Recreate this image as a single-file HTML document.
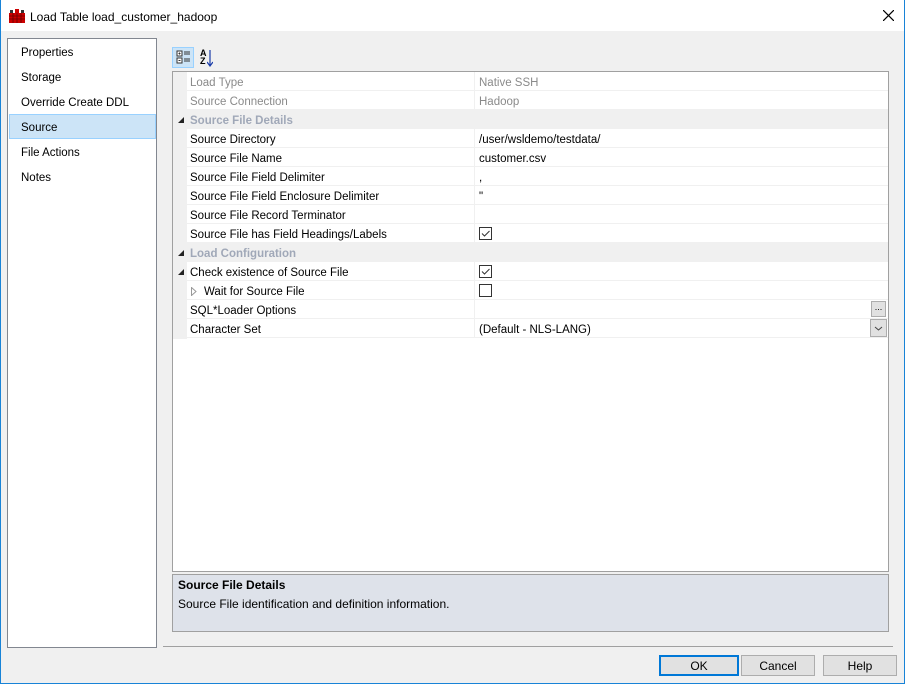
<!DOCTYPE html>
<html><head><style>
*{margin:0;padding:0;box-sizing:border-box}
body{width:905px;height:684px;background:#f0f0f0;font-family:"Liberation Sans",sans-serif;font-size:11.5px;color:#000;position:relative;overflow:hidden}
.a{position:absolute}
.win{left:0;top:0;width:905px;height:684px;border:1px solid #1883d7;border-top:none}
.title{left:0;top:0;width:905px;height:31px;background:#fff}
.list{left:7px;top:38px;width:150px;height:610px;background:#fff;border:1px solid #828790}
.li{position:absolute;left:13px;font-size:11.5px}
.sel{left:1px;top:75px;width:147px;height:25px;background:#cce4f7;border:1px solid #99d1ff}
.grid{left:172px;top:71px;width:717px;height:501px;background:#fff;border:1px solid #a0a0a0}
.gut{left:0;top:0;width:14px;height:267px;background:#f0f0f0}
.row{position:absolute;left:14px;width:701px;height:19px;border-bottom:1px solid #f0f0f0}
.row .n{position:absolute;left:3px;top:5px;white-space:nowrap}
.row .v{position:absolute;left:287px;top:0;height:19px;border-left:1px solid #f0f0f0;padding:5px 0 0 4px;width:414px;white-space:nowrap}
.cat{position:absolute;left:0;width:715px;height:19px;background:#f0f0f0;font-weight:bold;color:#a0a8b8}
.cat span{position:absolute;left:17px;top:5px}
.tri{position:absolute;left:5px;top:7px;width:0;height:0;border-left:6px solid transparent;border-bottom:6px solid #222}
.g{color:#8a8a8a}
.cb{position:absolute;left:4px;top:3px;width:13px;height:13px;border:1px solid #333;background:#fff}
.desc{left:172px;top:574px;width:717px;height:58px;background:#dee2ea;border:1px solid #a0a0a0}
.btn{position:absolute;top:655px;height:21px;background:#e1e1e1;border:1px solid #adadad;text-align:center;line-height:20px;font-size:12px}
</style></head><body>
<div class="a title"></div>
<div class="a win"></div>
<svg class="a" style="left:9px;top:9px" width="16" height="14" viewBox="0 0 16 14"><rect x="0" y="4" width="16" height="10" fill="#c00"/><rect x="1" y="1" width="3" height="3" fill="#333"/><rect x="6" y="0" width="4" height="4" fill="#c00"/><rect x="12" y="1" width="3" height="3" fill="#333"/><path d="M0 7h16M0 10h16M4 4v10M8 4v10M12 4v10" stroke="#600" stroke-width="0.8"/></svg>
<div class="a" style="left:30px;top:10px;font-size:12px">Load Table load_customer_hadoop</div>
<svg class="a" style="left:883px;top:10px" width="11" height="11"><path d="M0 0L11 11M11 0L0 11" stroke="#000" stroke-width="1.2"/></svg>

<div class="a list">
<div class="a sel"></div>
<div class="li" style="top:8px">Properties</div>
<div class="li" style="top:33px">Storage</div>
<div class="li" style="top:58px">Override Create DDL</div>
<div class="li" style="top:83px">Source</div>
<div class="li" style="top:108px">File Actions</div>
<div class="li" style="top:133px">Notes</div>
</div>

<div class="a" style="left:172px;top:47px;width:22px;height:21px;background:#cce4f7;border:1px solid #99d1ff"></div>
<svg class="a" style="left:176px;top:50px" width="15" height="15"><rect x="1" y="1" width="5" height="5" fill="#fff" stroke="#333"/><rect x="1" y="8" width="5" height="5" fill="#fff" stroke="#333"/><path d="M2.5 3.5h2M3.5 2.5v2M2.5 10.5h2M8 2h6M8 4h6M8 9h6M8 11h6" stroke="#333"/></svg>
<div class="a" style="left:200px;top:49px;font-size:9px;line-height:8px;font-weight:bold">A<br>Z</div>
<svg class="a" style="left:207px;top:50px" width="6" height="18"><path d="M3 0v15M0 12l3 4 3-4" stroke="#1a3ca8" fill="none" stroke-width="1.2"/></svg>

<div class="a grid">
<div class="a gut"></div>
<div class="row" style="top:0"><span class="n g">Load Type</span><span class="v g">Native SSH</span></div>
<div class="row" style="top:19px"><span class="n g">Source Connection</span><span class="v g">Hadoop</span></div>
<div class="cat" style="top:38px"><i class="tri"></i><span>Source File Details</span></div>
<div class="row" style="top:57px"><span class="n">Source Directory</span><span class="v">/user/wsldemo/testdata/</span></div>
<div class="row" style="top:76px"><span class="n">Source File Name</span><span class="v">customer.csv</span></div>
<div class="row" style="top:95px"><span class="n">Source File Field Delimiter</span><span class="v">,</span></div>
<div class="row" style="top:114px"><span class="n">Source File Field Enclosure Delimiter</span><span class="v">"</span></div>
<div class="row" style="top:133px"><span class="n">Source File Record Terminator</span><span class="v"></span></div>
<div class="row" style="top:152px"><span class="n">Source File has Field Headings/Labels</span><span class="v"><i class="cb"><svg width="11" height="11" style="position:absolute;left:0;top:0"><path d="M2 5.5l2.5 2.5 5-5" stroke="#333" fill="none"/></svg></i></span></div>
<div class="cat" style="top:171px"><i class="tri"></i><span>Load Configuration</span></div>
<div class="row" style="top:190px"><i class="tri" style="left:-9px"></i><span class="n">Check existence of Source File</span><span class="v"><i class="cb"><svg width="11" height="11" style="position:absolute;left:0;top:0"><path d="M2 5.5l2.5 2.5 5-5" stroke="#333" fill="none"/></svg></i></span></div>
<div class="row" style="top:209px"><svg style="position:absolute;left:4px;top:6px" width="6" height="9"><path d="M0.5 0.5L5 4.5 0.5 8.5z" fill="none" stroke="#999"/></svg><span class="n" style="left:17px">Wait for Source File</span><span class="v"><i class="cb"></i></span></div>
<div class="row" style="top:228px"><span class="n">SQL*Loader Options</span><span class="v"></span><div style="position:absolute;left:684px;top:1px;width:15px;height:16px;background:#e1e1e1;border:1px solid #adadad;font-size:9px;text-align:center;line-height:10px">...</div></div>
<div class="row" style="top:247px"><span class="n">Character Set</span><span class="v">(Default - NLS-LANG)</span><div style="position:absolute;left:683px;top:0;width:17px;height:18px;background:#e1e1e1;border:1px solid #adadad"><svg width="15" height="16"><path d="M4 7l3.5 3 3.5-3" stroke="#444" fill="none"/></svg></div></div>
</div>

<div class="a desc">
<div class="a" style="left:5px;top:3px;font-weight:bold;font-size:12px">Source File Details</div>
<div class="a" style="left:5px;top:22px;font-size:12px">Source File identification and definition information.</div>
</div>
<div class="a" style="left:163px;top:646px;width:730px;height:1px;background:#a0a0a0"></div>
<div class="btn" style="left:659px;width:80px;border:2px solid #0078d7;line-height:18px">OK</div>
<div class="btn" style="left:741px;width:74px">Cancel</div>
<div class="btn" style="left:823px;width:74px">Help</div>
</body></html>
